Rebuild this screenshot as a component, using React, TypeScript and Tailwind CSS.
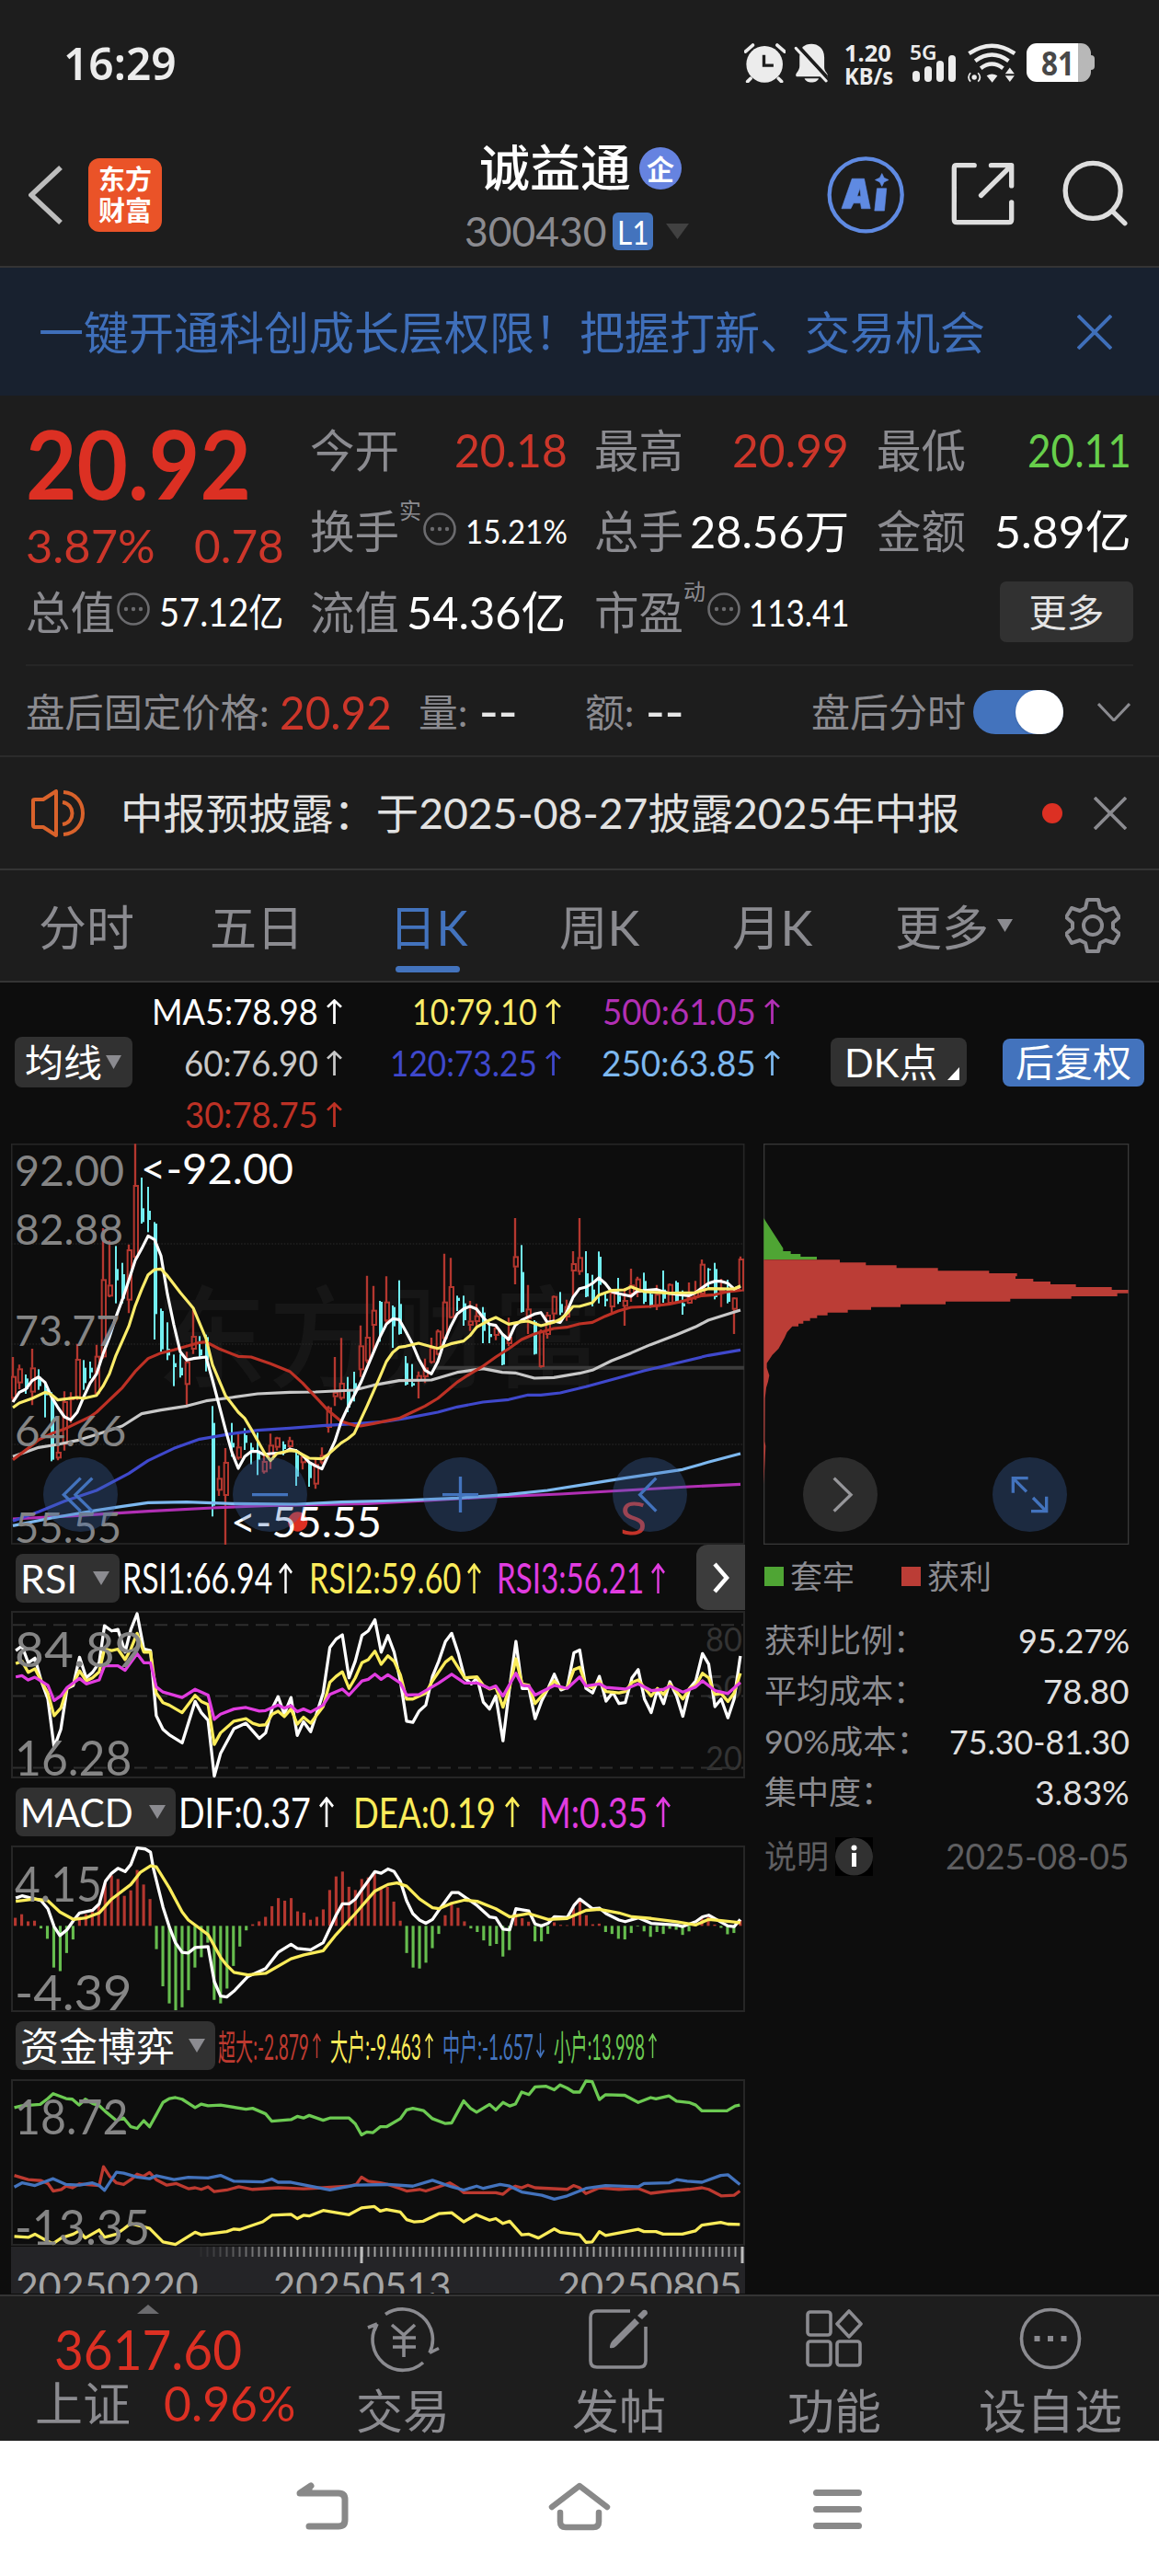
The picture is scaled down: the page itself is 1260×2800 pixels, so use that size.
import { useLayoutEffect, useRef, useState, type ReactNode } from "react";

/* Single-line text that is squeezed or stretched to the width of its box. */
function Fit({ className = "", children }: { className?: string; children: ReactNode }) {
  const box = useRef<HTMLSpanElement>(null);
  const text = useRef<HTMLSpanElement>(null);
  const [scale, setScale] = useState(1);
  useLayoutEffect(() => {
    if (box.current && text.current) setScale(box.current.clientWidth / text.current.offsetWidth);
  }, [children]);
  return (
    <span ref={box} className={`flex shrink-0 items-center ${className}`}>
      <span ref={text} className="shrink-0 origin-left whitespace-nowrap" style={{ transform: `scaleX(${scale})` }}>
        {children}
      </span>
    </span>
  );
}

const Up = ({ className = "", down = false }: { className?: string; down?: boolean }) => (
  <svg viewBox="0 0 16 28" preserveAspectRatio="none" className={`shrink-0 ${down ? "rotate-180" : ""} ${className}`}>
    <path d="M8 28V1.5M1 9l7-7.5L15 9" fill="none" stroke="currentColor" strokeWidth="2.6" />
  </svg>
);

const Tri = ({ className = "" }: { className?: string }) => (
  <svg viewBox="0 0 16 14" preserveAspectRatio="none" className={`shrink-0 ${className}`}>
    <path d="M0 0h16L8 14z" fill="currentColor" />
  </svg>
);

const Dots = ({ className = "" }: { className?: string }) => (
  <svg viewBox="0 0 36 36" className={`h-9 w-9 shrink-0 text-[#6b6b6e] ${className}`}>
    <circle cx="18" cy="18" r="16.5" fill="none" stroke="currentColor" strokeWidth="2.6" />
    <circle cx="10" cy="18" r="2.2" fill="currentColor" />
    <circle cx="18" cy="18" r="2.2" fill="currentColor" />
    <circle cx="26" cy="18" r="2.2" fill="currentColor" />
  </svg>
);

const Cross = ({ className = "" }: { className?: string }) => (
  <svg viewBox="0 0 36 36" className={`shrink-0 ${className}`}>
    <path d="M1 1l34 34M35 1L1 35" fill="none" stroke="currentColor" strokeWidth="3.7" />
  </svg>
);

function StatusBar() {
  return (
    <div className="flex h-[140px] items-start pt-[47px] font-['Noto_Sans'] text-[#ececec]">
      <Fit className="ml-[69px] h-[43px] w-[123px] text-[49px] font-semibold leading-none">16:29</Fit>
      <svg viewBox="57 50 134 128" className="ml-[617px] h-[43px] w-[45px]" fill="#ececec">
        <circle cx="123" cy="118" r="59" />
        <path d="M61 77l24-21M164 56l24 21M78 164l-10 10M168 164l10 10" stroke="#ececec" strokeWidth="11" strokeLinecap="round" />
        <path d="M121 88v34h31" fill="none" stroke="#1d1d1d" strokeWidth="10" />
      </svg>
      <svg viewBox="220 50 112 128" className="ml-[9px] h-[43px] w-[38px]" fill="#ececec">
        <path d="M248 62c20-18 70-14 70 34v32c0 14 12 18 12 30H228c-8-8 10-16 10-34V90zM254 164h46c-5 17-41 17-46 0z" />
        <path d="M234 60l92 100" stroke="#1d1d1d" strokeWidth="12" />
        <path d="M226 66l98 106" stroke="#ececec" strokeWidth="9" strokeLinecap="round" />
      </svg>
      <div className="ml-[17px] flex flex-col font-bold">
        <Fit className="h-[21px] w-[51px] text-[25px] leading-none">1.20</Fit>
        <Fit className="mt-[4px] h-[21px] w-[53px] text-[25px] leading-none">KB/s</Fit>
      </div>
      <div className="ml-[18px] flex w-[52px] flex-col font-semibold">
        <Fit className="h-[18px] w-[30px] text-[22px] leading-none">5G</Fit>
        <div className="mt-[-5px] flex h-[29px] items-end gap-[5px] pl-[3px]">
          <i className="h-[12px] w-2 rounded bg-[#ececec]" />
          <i className="h-[17px] w-2 rounded bg-[#ececec]" />
          <i className="h-[23px] w-2 rounded bg-[#ececec]" />
          <i className="h-[29px] w-2 rounded bg-[#ececec]" />
        </div>
      </div>
      <svg viewBox="784 50 160 128" className="ml-[10px] h-[43px] w-[54px]" fill="none" stroke="#ececec">
        <path d="M791 83q74-50 148 0M811 107q54-39 108 0M829 131q36-28 72 0" strokeWidth="13" />
        <path d="M848 155q17-10 35 0l-17 22zM908 149l15-20 15 20zM908 155h30l-15 20z" fill="#ececec" stroke="none" />
        <circle cx="808" cy="160" r="8" fill="#ececec" stroke="none" />
        <path d="M796 146q-13 14 0 28M820 146q13 14 0 28" strokeWidth="5" />
      </svg>
      <div className="ml-[11px] flex items-center">
        <div className="flex h-[42px] w-[70px] items-center rounded-[11px] bg-linear-to-r from-white from-80% to-[#b8b8b8] to-80% pl-[16px]">
          <Fit className="w-[36px] text-[35px] font-bold leading-none text-[#484848]">81</Fit>
        </div>
        <i className="h-4 w-1 rounded-r bg-[#b8b8b8]" />
      </div>
    </div>
  );
}

function Header() {
  return (
    <div className="flex h-[151px] border-b-2 border-[#343434]">
      <svg viewBox="0 0 38 64" className="ml-[31px] mt-[40px] h-16 w-[38px]">
        <path d="M35 2L3 32l32 30" fill="none" stroke="#bdbdbd" strokeWidth="5.5" />
      </svg>
      <div className="ml-[27px] mt-[32px] flex h-20 w-20 flex-col items-center justify-center rounded-xl bg-[#ea5328] text-[29px] font-bold leading-[34px] text-white">
        <span>东方</span>
        <span>财富</span>
      </div>
      <div className="ml-[329px] mt-[10px] w-[250px]">
        <div className="flex h-[65px] items-center">
          <Fit className="ml-[16px] w-[165px] text-[54px] font-medium leading-none text-white">诚益通</Fit>
          <span className="ml-[9px] flex h-[46px] w-[46px] items-center justify-center rounded-full bg-[#6683e0] text-[30px] font-bold leading-none text-white">企</span>
        </div>
        <div className="flex h-[54px] items-center pt-[18px]">
          <Fit className="w-[155px] text-[45px] leading-none text-[#8b8b90]">300430</Fit>
          <span className="ml-[6px] flex h-[41px] w-[44px] items-center justify-center rounded-[6px] bg-[#4373bd]">
            <Fit className="w-[34px] text-[37px] leading-none text-white">L1</Fit>
          </span>
          <Tri className="ml-[14px] h-[17px] w-[25px] text-[#414141]" />
        </div>
      </div>
      <svg viewBox="328 416 256 256" className="ml-[144px] mt-[29px] h-[85px] w-[85px]">
        <circle cx="455" cy="545" r="119" fill="none" stroke="#5f8ae2" strokeWidth="13" />
        <path d="M410 492h40l20 98h-29l-3-18h-23l-9 18h-30zM427 549h12l-3-26zM492 524h31l-7 73h-32zM508 475l7 14 15 7-15 7-7 14-7-14-15-7 15-7z" fill="#5f8ae2" fillRule="evenodd" stroke="#5f8ae2" strokeWidth="2" />
      </svg>
      <svg viewBox="730 440 212 208" className="ml-[49px] mt-[36px] h-[69px] w-[71px]" fill="none" stroke="#dedede" strokeWidth="16" strokeLinecap="round" strokeLinejoin="round">
        <path d="M808 451h-58q-8 0-8 8v170q0 9 9 9h170q9 0 9-9v-57M863 451h67v67M830 550l98-97" />
      </svg>
      <svg viewBox="1096 434 212 216" className="ml-[51px] mt-[34px] h-[72px] w-[71px]" fill="none" stroke="#dedede" strokeWidth="16" strokeLinecap="round">
        <circle cx="1195" cy="534" r="90" />
        <path d="M1258 600l41 40" />
      </svg>
    </div>
  );
}

function Quote() {
  const label = "w-[97px] text-[49px] leading-none text-[#8b8b90]";
  return (
    <div className="bg-[#1d1d1d]">
      <div className="mx-[28px] h-[294px] border-b-2 border-[#262626] pt-[15px]">
        <div className="grid grid-cols-[280px_280px_278px_279px] grid-rows-[88px_88px_88px] gap-x-[29px]">
          <div className="row-span-2 text-[#cd362a]">
            <div className="flex h-[88px] items-center pt-[28px]">
              <Fit className="w-[245px] text-[104px] font-bold leading-none text-[#dc3023]">20.92</Fit>
            </div>
            <div className="flex h-[117px] items-center pt-[2px]">
              <Fit className="w-[141px] text-[51px] leading-none">3.87%</Fit>
              <Fit className="ml-[42px] w-[98px] text-[51px] leading-none">0.78</Fit>
            </div>
          </div>
          <div className="flex items-center">
            <Fit className={label}>今开</Fit>
            <Fit className="ml-[60px] w-[123px] text-[50px] leading-none text-[#cd362a]">20.18</Fit>
          </div>
          <div className="flex items-center">
            <Fit className={label}>最高</Fit>
            <Fit className="ml-[53px] w-[127px] text-[50px] leading-none text-[#cd362a]">20.99</Fit>
          </div>
          <div className="flex items-center">
            <Fit className={label}>最低</Fit>
            <Fit className="ml-[67px] w-[113px] text-[50px] leading-none text-[#67cf4b]">20.11</Fit>
          </div>
          <div className="flex items-center">
            <Fit className={label}>换手</Fit>
            <span className="mb-[44px] w-[24px] text-[24px] leading-none text-[#8b8b90]">实</span>
            <Dots className="mb-[4px] ml-[2px]" />
            <Fit className="ml-[10px] w-[111px] text-[36px] leading-none text-white">15.21%</Fit>
          </div>
          <div className="flex items-center">
            <Fit className={label}>总手</Fit>
            <Fit className="ml-[7px] w-[173px] text-[49px] leading-none text-white">28.56万</Fit>
          </div>
          <div className="flex items-center">
            <Fit className={label}>金额</Fit>
            <Fit className="ml-[31px] w-[149px] text-[49px] leading-none text-white">5.89亿</Fit>
          </div>
          <div className="flex items-center">
            <Fit className={label}>总值</Fit>
            <Dots className="mb-[6px] ml-[2px]" />
            <Fit className="ml-[10px] w-[135px] text-[42px] leading-none text-white">57.12亿</Fit>
          </div>
          <div className="flex items-center">
            <Fit className={label}>流值</Fit>
            <Fit className="ml-[8px] w-[173px] text-[49px] leading-none text-white">54.36亿</Fit>
          </div>
          <div className="flex items-center">
            <Fit className={label}>市盈</Fit>
            <span className="mb-[44px] w-[24px] text-[24px] leading-none text-[#8b8b90]">动</span>
            <Dots className="mb-[6px] ml-[2px]" />
            <Fit className="ml-[9px] w-[110px] text-[41px] leading-none text-white">113.41</Fit>
          </div>
          <div className="flex items-center justify-end">
            <span className="flex h-[66px] w-[145px] items-center justify-center rounded-[7px] bg-[#313131]">
              <Fit className="w-[82px] text-[41px] leading-none text-[#e4e4e4]">更多</Fit>
            </span>
          </div>
        </div>
      </div>
      <div className="flex h-[99px] items-center border-b-2 border-[#2b2b2b] pt-[2px] text-[42px] leading-none text-[#8b8b90]">
        <Fit className="ml-[28px] w-[265px]">盘后固定价格:</Fit>
        <Fit className="ml-[11px] w-[122px] text-[50px] text-[#cd362a]">20.92</Fit>
        <Fit className="ml-[29px] w-[54px]">量:</Fit>
        <Fit className="ml-[12px] w-[41px] font-bold text-[#e6e6e6]">--</Fit>
        <Fit className="ml-[74px] w-[54px]">额:</Fit>
        <Fit className="ml-[12px] w-[41px] font-bold text-[#e6e6e6]">--</Fit>
        <Fit className="ml-[139px] w-[168px]">盘后分时</Fit>
        <span className="ml-[8px] flex h-[48px] w-[98px] justify-end rounded-full bg-[#4373bd]">
          <i className="h-[48px] w-[52px] rounded-full bg-white shadow" />
        </span>
        <svg viewBox="0 0 36 20" className="ml-[37px] h-5 w-9">
          <path d="M1 1l17 18L35 1" fill="none" stroke="#8b8b90" strokeWidth="3" />
        </svg>
      </div>
    </div>
  );
}

function Notice() {
  return (
    <div className="flex h-[123px] items-center border-b-2 border-[#343434]">
      <svg viewBox="0 0 60 52" className="ml-[34px] h-[52px] w-[60px]" fill="none" stroke="#d9622b" strokeWidth="4" strokeLinejoin="round">
        <path d="M2 12q0-1 2-1h9L27 2v48L13 41H4q-2 0-2-2zM35 3c28 2 28 44 0 46M34 14c14 2 14 22 0 24" />
      </svg>
      <Fit className="ml-[37px] w-[912px] text-[46px] leading-none text-[#e2e2e2]">中报预披露：于2025-08-27披露2025年中报</Fit>
      <i className="ml-[90px] h-[22px] w-[22px] rounded-full bg-[#dc3023]" />
      <Cross className="ml-[34px] h-[36px] w-[36px] text-[#8b8b90]" />
    </div>
  );
}

function Tabs() {
  return (
    <div className="flex h-[122px] border-b-2 border-[#343434] pt-[4px] text-[52px] leading-none text-[#8b8b90]">
      <Fit className="ml-[42px] w-[104px]">分时</Fit>
      <Fit className="ml-[82px] w-[102px]">五日</Fit>
      <div className="relative ml-[93px] flex w-[85px]">
        <Fit className="w-[85px] text-[#4373bd]">日K</Fit>
        <i className="absolute bottom-[9px] left-[7px] h-[7px] w-[70px] rounded bg-[#4373bd]" />
      </div>
      <Fit className="ml-[100px] w-[87px]">周K</Fit>
      <Fit className="ml-[101px] w-[87px]">月K</Fit>
      <Fit className="ml-[90px] w-[102px]">更多</Fit>
      <Tri className="mb-[5px] ml-[9px] h-[14px] w-[17px] self-center" />
      <svg viewBox="0 0 60 60" className="mb-[5px] ml-[57px] h-[60px] w-[60px] self-center" fill="none" stroke="currentColor" strokeWidth="4" strokeLinejoin="round">
        <path d="M24 2h12l2 9 6 3 9-3 6 10-7 6v6l7 6-6 10-9-3-6 3-2 9H24l-2-9-6-3-9 3L1 39l7-6v-6l-7-6L7 11l9 3 6-3z" />
        <circle cx="30" cy="30" r="10" />
      </svg>
    </div>
  );
}

function Ma({ box, text, color, children }: { box: string; text: string; color: string; children: ReactNode }) {
  return (
    <div className={`flex h-[56px] items-center justify-end text-[38px] leading-none ${box} ${color}`}>
      <Fit className={text}>{children}</Fit>
      <Up className="ml-[9px] h-[27px] w-[17px]" />
    </div>
  );
}

function MaRow() {
  return (
    <div className="flex h-[175px] items-center bg-[#0d0d0d]">
      <span className="mb-[3px] ml-[16px] flex h-[55px] w-[128px] items-center rounded-lg bg-[#313131]">
        <Fit className="ml-[11px] w-[84px] text-[41px] leading-none text-white">均线</Fit>
        <Tri className="ml-[4px] h-[15px] w-[17px] text-[#8b8b90]" />
      </span>
      <div className="flex h-full pt-[3px]">
        <div className="w-[228px]">
          <Ma box="w-[228px]" text="w-[181px]" color="text-white">MA5:78.98</Ma>
          <Ma box="w-[228px]" text="w-[146px]" color="text-[#c8c8c8]">60:76.90</Ma>
          <Ma box="w-[228px]" text="w-[145px]" color="text-[#bd3125]">30:78.75</Ma>
        </div>
        <div className="w-[238px]">
          <Ma box="w-[238px]" text="w-[136px]" color="text-[#fbec6a]">10:79.10</Ma>
          <Ma box="w-[238px]" text="w-[160px]" color="text-[#3f48cc]">120:73.25</Ma>
        </div>
        <div className="w-[238px]">
          <Ma box="w-[238px]" text="w-[167px]" color="text-[#b12fb4]">500:61.05</Ma>
          <Ma box="w-[238px]" text="w-[168px]" color="text-[#7db8ef]">250:63.85</Ma>
        </div>
      </div>
      <span className="relative mb-[2px] ml-[55px] flex h-[53px] w-[148px] items-center rounded-lg bg-[#313131]">
        <Fit className="ml-[15px] w-[101px] text-[43px] leading-none text-white">DK点</Fit>
        <svg viewBox="0 0 13 14" className="absolute bottom-[7px] right-[8px] h-[14px] w-[13px]">
          <path d="M13 0v14H0z" fill="#fff" />
        </svg>
      </span>
      <span className="mb-[2px] ml-[39px] flex h-[52px] w-[154px] items-center justify-center rounded-lg bg-[#4373bd]">
        <Fit className="w-[126px] text-[41px] leading-none text-white">后复权</Fit>
      </span>
    </div>
  );
}

/* direction, high, body top, body bottom, low */
const CANDLES = `r765,828,900,912 r790,803,850,870 c822,835,870,885 r738,800,880,922 c805,830,860,872 c850,870,890,962 c880,910,1100,1105 r1000,1075,1095,1102 r877,910,1050,1070 r880,895,905,980 r722,772,900,905 c775,800,850,872 c780,800,815,835 r725,762,885,890 r345,512,765,770 r385,530,567,570 c403,478,515,590 c458,495,575,590 r398,415,580,622 r70,205,440,445 c180,280,325,330 c210,288,318,358 c325,330,625,708 c607,615,740,748 c652,738,760,775 c757,785,798,860 c755,800,825,832 r748,780,855,930 r612,697,740,755 c697,740,760,765 c692,700,775,812 c925,980,1250,1285 r1120,1160,1200,1218 r1062,1108,1217,1377 c980,1045,1060,1090 r1015,1058,1095,1100 c997,1020,1045,1068 c1045,1060,1075,1115 c1012,1070,1100,1150 r1080,1105,1140,1145 r1015,1052,1100,1130 r1025,1028,1060,1070 c1040,1050,1065,1085 r1025,1037,1058,1062 c1065,1085,1155,1185 r1085,1090,1110,1132 c1105,1110,1160,1188 r1095,1115,1180,1195 r1060,1085,1110,1115 r925,930,995,1012 r765,880,895,925 r703,850,900,905 c830,870,930,945 c813,850,880,910 r662,728,807,830 r500,700,778,785 r533,612,662,745 c582,585,690,715 r502,585,648,660 c597,602,665,735 c515,592,690,692 c762,785,855,858 c788,850,858,862 r812,825,842,900 r770,800,830,850 r702,735,783,787 r675,680,757,760 r428,585,705,710 r442,535,637,640 c565,572,582,615 c565,590,645,663 r582,647,662,680 r592,630,650,665 c602,620,680,720 c660,690,700,720 r660,670,695,710 c690,700,790,792 r637,700,722,730 r312,437,472,528 c400,488,618,620 r530,608,640,690 c645,650,755,757 r675,680,797,800 r618,628,692,705 r565,567,625,650 c553,592,620,628 r578,600,635,647 r420,460,485,570 r312,440,487,497 c420,492,568,570 c497,545,580,600 c421,438,530,590 c555,575,583,600 r545,555,602,620 c507,565,585,592 r540,580,600,663 r477,530,560,585 r503,510,555,570 c490,517,585,592 c555,560,602,604 r530,560,600,612 c483,545,575,588 r525,528,590,595 c517,522,582,585 c548,590,600,627 r522,570,590,592 r517,555,570,578 r447,462,560,565 c475,478,482,545 c458,478,570,577 r510,545,550,602 c513,540,585,590 r570,572,610,690 r437,445,550,552`
  .split(" ")
  .map((s) => ({ up: s[0] === "r", v: s.slice(1).split(",").map(Number) }));

const MA_LINES: [string, string][] = [
  ["#b12fb4", "42,1293 252,1282 483,1268 693,1257 882,1249 1197,1243 1407,1232 1575,1222 1827,1212 2037,1200 2247,1188 2415,1180"],
  ["#7db8ef", "42,1315 168,1290 315,1265 399,1252 483,1240 609,1238 756,1243 966,1245 1113,1238 1302,1233 1491,1225 1659,1213 1785,1200 1911,1180 2037,1160 2226,1132 2310,1108 2415,1080"],
  ["#3f48cc", "42,1300 126,1270 210,1235 315,1200 420,1145 483,1103 567,1063 651,1033 756,1015 840,1004 945,997 1050,989 1155,983 1260,975 1323,965 1428,945 1491,928 1575,912 1659,904 1722,889 1764,889 1827,882 1911,862 2016,833 2100,810 2205,785 2310,760 2415,742"],
  ["#c8c8c8", "42,1090 126,1060 189,1050 252,1037 315,1018 399,990 462,950 525,938 609,925 672,908 756,897 840,885 945,880 1029,879 1155,873 1218,857 1302,842 1407,840 1491,815 1575,803 1638,815 1680,817 1743,834 1806,832 1890,818 1932,808 1995,777 2058,752 2121,725 2205,693 2268,667 2310,645 2415,612"],
  ["#bd3125", "42,1100 105,1052 126,1035 168,1015 210,1000 252,980 294,960 315,945 378,885 399,865 441,812 483,770 525,752 567,742 609,730 651,718 672,716 714,738 777,763 819,765 882,787 945,812 987,850 1029,895 1071,940 1113,975 1155,988 1176,990 1218,982 1302,965 1344,945 1386,925 1428,900 1470,865 1491,847 1533,820 1575,795 1617,765 1659,738 1701,708 1743,690 1806,672 1848,668 1890,657 1932,652 1974,632 2016,615 2058,603 2121,600 2184,592 2226,583 2289,565 2331,562 2373,552 2415,547"],
  ["#fff", "42,912 63,880 84,870 105,842 126,830 147,848 168,895 189,930 210,960 231,970 252,945 273,895 294,850 315,820 336,755 357,700 378,635 399,578 420,515 441,450 462,412 483,370 504,382 525,435 546,560 567,660 588,748 609,775 630,770 672,765 693,840 714,920 735,1000 756,1075 777,1128 798,1090 819,1073 840,1073 861,1083 882,1080 924,1077 945,1065 966,1070 987,1085 1008,1108 1029,1120 1050,1130 1071,1085 1092,1040 1113,975 1134,930 1155,890 1176,850 1197,800 1239,700 1260,658 1281,640 1302,643 1323,680 1344,720 1365,770 1386,808 1407,820 1428,780 1449,715 1470,665 1491,625 1512,608 1533,600 1554,608 1575,635 1596,658 1617,662 1638,690 1659,708 1680,662 1701,645 1722,635 1743,625 1764,620 1785,652 1806,648 1827,652 1848,620 1869,570 1890,542 1911,537 1932,525 1953,507 1974,525 1995,552 2016,558 2058,567 2079,550 2142,545 2184,558 2247,565 2268,555 2310,525 2331,518 2352,518 2373,524 2394,543 2415,535"],
  ["#fbec6a", "42,930 63,915 105,900 147,880 168,888 189,905 252,897 273,900 315,890 336,860 357,820 378,760 420,665 441,598 462,545 483,497 504,480 525,478 546,500 588,555 630,605 651,655 672,705 693,790 735,890 777,945 798,965 819,1000 861,1075 882,1103 903,1080 945,1070 966,1072 1008,1095 1050,1097 1071,1082 1113,1045 1134,1032 1155,1015 1176,970 1197,925 1239,830 1260,780 1281,750 1302,733 1323,730 1365,720 1428,737 1470,722 1512,713 1533,695 1554,668 1596,645 1617,636 1659,658 1701,650 1722,648 1764,663 1806,652 1827,642 1848,625 1869,600 1890,600 1932,588 1953,563 1995,548 2037,546 2058,536 2100,552 2184,557 2268,555 2310,542 2394,543 2415,533"],
];

function RoundButton({ className = "", d, gray = false }: { className?: string; d: string; gray?: boolean }) {
  return (
    <span className={`absolute top-[341px] h-[81px] w-[81px] rounded-full ${gray ? "bg-[#2c2c2c]" : "bg-[#3f6eb7]/30"} ${className}`}>
      <svg viewBox="0 0 243 243" className="h-full w-full">
        <path d={d} fill="none" stroke={gray ? "#97979b" : "#4373bd"} strokeWidth="10" />
      </svg>
    </span>
  );
}

function KChart() {
  const axis = "absolute left-[4px] text-[47px] leading-none text-[#858585]";
  return (
    <div className="relative ml-[12px] h-[436px] w-[798px]">
      <span className="absolute left-[158px] top-[150px] whitespace-nowrap text-[120px] font-medium leading-none tracking-[2px] text-[#161616]">东方财富</span>
      <svg viewBox="36 69 2394 1308" className="absolute inset-0 h-full w-full">
        <rect x="38" y="71" width="2388" height="1303" fill="none" stroke="#262626" strokeWidth="5" />
        <path d="M36 396H2427M36 723H2427M36 1050H2427" stroke="#2a2a2a" strokeWidth="3" strokeDasharray="5 5" />
        <path d="M1420 800H2427" stroke="#3a3a3a" strokeWidth="12" />
        {CANDLES.map(({ up, v: [h, t, b, l] }, i) => {
          const x = 42 + i * 21;
          return up ? (
            <g key={i} stroke="#b4372f" fill="none">
              <path d={`M${x} ${h}V${t}M${x} ${b}V${l}`} strokeWidth="7" />
              <rect x={x - 4} y={t + 2} width="13" height={Math.max(b - t - 4, 2)} strokeWidth="6" />
            </g>
          ) : (
            <g key={i} fill="#72eef0">
              <rect x={x - 3} y={h} width="6" height={l - h} />
              <rect x={x - 3} y={t} width="12" height={b - t} />
            </g>
          );
        })}
        {MA_LINES.map(([c, p]) => (
          <polyline key={c} points={p} fill="none" stroke={c} strokeWidth="9.5" strokeLinejoin="round" />
        ))}
        <circle cx="971" cy="1302" r="32" fill="#dc3023" />
      </svg>
      <div className={`${axis} top-[5px]`}><Fit className="w-[119px]">92.00</Fit></div>
      <div className={`${axis} top-[69px]`}><Fit className="w-[118px]">82.88</Fit></div>
      <div className={`${axis} top-[179px]`}><Fit className="w-[114px]">73.77</Fit></div>
      <div className={`${axis} top-[288px]`}><Fit className="w-[121px]">64.66</Fit></div>
      <div className={`${axis} top-[393px]`}><Fit className="w-[116px]">55.55</Fit></div>
      <div className="absolute left-[141px] top-[3px] text-[47px] leading-none text-white"><Fit className="w-[166px]">&lt;-92.00</Fit></div>
      <div className="absolute left-[239px] top-[387px] text-[47px] leading-none text-white"><Fit className="w-[164px]">&lt;-55.55</Fit></div>
      <div className="absolute left-[662px] top-[381px] text-[50px] leading-none text-[#c43329]"><Fit className="w-[29px] font-['Noto_Sans']">S</Fit></div>
      <RoundButton className="left-[35px]" d="M122 68L67 122l55 54M160 68l-55 54 55 54" />
      <RoundButton className="left-[241px]" d="M63 122h117" />
      <RoundButton className="left-[448px]" d="M63 122h117M121.500 63v117" />
      <RoundButton className="left-[654px]" d="M142 68L89 122l53 54" />
    </div>
  );
}

function ChipChart() {
  return (
    <div className="relative ml-[20px] h-[436px] w-[398px]">
      <svg viewBox="61 69 1194 1308" className="h-full w-full">
        <rect x="63" y="71" width="1188" height="1304" fill="none" stroke="#383838" strokeWidth="4" />
        <path d="M62 312L68 322 125 410V420H150V429H182V438H235V448H62z" fill="#4fa534" />
        <path d="M62 448H310V457H395V466H495V475H630V484H797V492H888V502H883V510H941V519H997V528H1080V537H1197V546H1251V557H1215V567H1065V575H866V584H655V593H508V602H412V611H336V620H270V629H236V638H213V647H191V656H175V665H155L138 684 130 702 110 738 90 758 72 785V800L80 825 76 845 70 865 66 900 65 1040 68 1055 62 1180z" fill="#bb3d36" />
      </svg>
      <RoundButton gray className="left-[43px]" d="M101 68l55 54-55 54" />
      <RoundButton className="left-[249px]" d="M111 112L69 70M67 116V68h49M132 132l43 44M176 128v48h-50" />
    </div>
  );
}

function Pill({ box, text, tri, children }: { box: string; text: string; tri: string; children: ReactNode }) {
  return (
    <span className={`ml-[5px] flex h-[53px] shrink-0 items-center rounded-lg bg-[#313131] text-white ${box}`}>
      <Fit className={`ml-[5px] leading-none ${text}`}>{children}</Fit>
      <Tri className={`h-[15px] w-[18px] text-[#8b8b90] ${tri}`} />
    </span>
  );
}

function Plot({ viewBox, className, lines, children }: { viewBox: string; className: string; lines: [string, string][]; children?: ReactNode }) {
  return (
    <svg viewBox={viewBox} preserveAspectRatio="none" className={`block w-[798px] overflow-visible border-2 border-[#262626] ${className}`}>
      {children}
      {lines.map(([c, p]) => (
        <polyline key={c} points={p} fill="none" stroke={c} strokeWidth="3.3" strokeLinejoin="round" vectorEffect="non-scaling-stroke" />
      ))}
    </svg>
  );
}

const RSI: [string, string][] = [
  ["#fff", "30,340 43,325 56,380 70,365 83,440 97,500 110,660 124,600 137,465 150,455 163,362 177,430 190,412 204,380 215,258 230,275 243,270 258,345 270,270 283,218 297,335 311,340 323,555 337,600 350,618 377,645 404,508 417,545 431,570 444,755 457,680 485,598 510,580 538,630 551,612 565,530 577,492 590,550 604,495 617,620 630,575 645,608 658,545 671,480 685,330 698,302 711,288 725,430 738,375 752,290 765,275 779,238 792,345 806,290 819,345 832,440 845,573 858,577 871,540 885,520 899,425 912,375 926,310 939,283 953,350 966,430 980,450 992,430 1005,510 1018,533 1031,490 1046,638 1060,460 1073,310 1086,465 1100,465 1113,565 1127,505 1141,462 1153,418 1167,470 1180,462 1194,347 1206,338 1219,465 1233,480 1247,425 1261,507 1275,478 1288,515 1301,512 1315,430 1328,403 1341,500 1355,545 1368,470 1381,515 1394,443 1408,490 1421,557 1435,465 1448,440 1462,350 1475,385 1488,525 1501,500 1515,562 1528,500 1541,358"],
  ["#fbec5a", "30,383 43,375 56,412 70,400 83,440 97,480 110,555 124,530 137,465 150,450 163,407 177,440 190,430 204,410 215,335 230,340 243,335 258,370 270,335 283,283 297,345 311,345 323,480 337,512 350,520 377,545 404,488 417,508 431,518 444,650 457,612 485,573 510,565 524,580 538,587 551,585 565,550 577,540 590,558 604,533 617,583 630,560 645,580 671,525 685,445 698,425 711,410 725,465 738,430 752,380 765,370 779,342 792,385 806,357 819,375 832,420 845,500 858,500 885,480 899,440 926,378 939,362 966,430 992,427 1005,455 1018,467 1031,460 1046,527 1060,460 1073,367 1086,450 1100,455 1113,515 1141,465 1153,440 1167,465 1180,462 1194,403 1206,395 1219,455 1233,463 1247,440 1261,475 1288,480 1301,475 1315,445 1328,437 1355,490 1368,465 1381,485 1394,450 1421,500 1435,465 1448,455 1462,415 1475,430 1488,485 1501,482 1515,508 1528,480 1541,415"],
  ["#e13ce0", "30,427 43,423 56,437 70,428 97,455 110,505 124,490 137,462 163,432 177,450 204,437 215,390 243,390 258,405 283,350 297,380 311,380 323,460 337,477 377,495 404,468 431,487 444,567 457,550 485,533 510,528 538,540 551,538 577,520 590,530 604,522 617,542 630,533 645,543 671,520 685,485 711,467 725,487 752,440 765,435 779,418 792,435 806,420 832,447 845,487 871,485 912,447 939,418 966,447 992,447 1018,465 1031,457 1046,490 1073,415 1086,455 1100,457 1113,487 1153,455 1180,465 1206,427 1219,457 1247,450 1261,462 1301,467 1328,450 1355,472 1381,468 1394,457 1421,477 1448,460 1462,440 1488,472 1515,482 1541,445"],
];

const MACD_BARS = [403, 392, 414, 412, 436, 468, 557, 568, 512, 470, 400, 392, 385, 365, 295, 272, 283, 335, 318, 255, 300, 345, 500, 615, 668, 689, 680, 627, 557, 525, 480, 657, 668, 622, 552, 492, 442, 423, 414, 400, 367, 342, 350, 342, 383, 387, 409, 400, 377, 317, 275, 260, 307, 317, 283, 278, 262, 307, 307, 353, 412, 512, 557, 560, 542, 497, 453, 395, 355, 372, 414, 436, 447, 473, 490, 484, 523, 503, 390, 404, 415, 476, 476, 453, 417, 425, 426, 372, 350, 395, 423, 421, 447, 453, 468, 470, 450, 430, 445, 462, 447, 453, 437, 440, 456, 445, 429, 400, 400, 424, 434, 454, 450, 410];

const MACD: [string, string][] = [
  ["#fff", "30,342 43,335 70,345 83,350 97,375 110,430 122,458 137,440 150,412 163,388 190,380 204,360 217,290 230,265 243,250 258,260 270,238 283,187 300,190 311,200 317,250 337,370 350,430 363,480 377,510 390,512 404,495 431,492 444,600 457,645 470,648 485,630 514,585 551,560 577,510 604,485 617,498 645,502 671,480 698,395 711,360 725,360 738,345 752,315 779,260 792,265 806,252 819,260 832,290 845,350 858,390 872,410 885,420 899,408 912,380 939,325 953,325 992,365 1018,400 1031,403 1046,438 1060,440 1073,375 1086,378 1100,382 1113,422 1126,428 1140,420 1153,400 1180,402 1194,365 1206,345 1233,375 1247,373 1261,390 1288,410 1301,415 1328,403 1355,420 1408,425 1421,430 1448,415 1462,400 1475,395 1515,428 1528,430 1541,408"],
  ["#fbec5a", "30,352 70,345 97,350 122,385 150,408 177,403 204,388 230,345 270,300 290,262 311,242 323,245 350,310 377,385 390,410 431,455 457,525 470,550 485,572 514,580 551,575 604,530 631,518 671,505 698,455 738,390 779,320 806,300 825,295 845,305 872,345 899,372 912,375 939,358 966,348 992,352 1031,375 1060,400 1100,390 1140,408 1180,405 1219,380 1247,377 1288,388 1315,400 1355,405 1408,415 1448,425 1475,408 1501,412 1541,418"],
];

const FUNDS: [string, string][] = [
  ["#6cca52", "27,978 43,972 81,968 97,950 108,935 135,950 148,952 162,970 175,952 190,965 204,972 217,990 240,1018 255,1010 270,1037 283,1042 297,1018 309,1037 323,1000 337,962 350,950 363,947 377,952 404,978 417,967 431,972 457,970 510,983 524,980 551,997 564,1020 604,1015 617,1005 630,1010 642,1002 671,1017 685,1010 725,1010 738,1028 751,1062 762,1053 775,1055 790,1037 803,1037 832,1012 845,985 858,980 880,987 899,1012 926,1027 939,1025 952,990 964,957 978,980 991,992 1018,968 1031,985 1046,962 1060,973 1072,967 1085,930 1100,938 1113,914 1136,912 1153,923 1165,908 1180,918 1193,930 1206,930 1219,896 1232,898 1247,953 1260,938 1300,940 1328,962 1354,947 1365,951 1392,942 1408,958 1434,962 1448,970 1461,988 1513,988 1530,973 1540,970"],
  ["#bd3a30", "27,1187 56,1200 83,1203 97,1212 108,1235 125,1230 135,1220 148,1225 163,1213 204,1218 213,1160 226,1190 240,1210 255,1215 270,1200 283,1183 296,1190 309,1178 323,1200 345,1217 365,1212 390,1228 404,1225 417,1230 431,1222 444,1237 470,1232 495,1222 524,1230 577,1225 630,1228 671,1225 725,1220 740,1215 751,1192 765,1205 790,1210 806,1215 832,1228 845,1235 872,1230 885,1235 912,1222 935,1210 952,1225 964,1240 1031,1240 1046,1245 1060,1228 1072,1220 1085,1225 1098,1217 1113,1225 1180,1230 1193,1218 1206,1225 1219,1243 1247,1225 1288,1230 1328,1227 1354,1242 1392,1235 1434,1230 1461,1225 1475,1230 1501,1250 1528,1248 1540,1235"],
  ["#4373bd", "27,1223 43,1210 70,1218 108,1197 135,1215 163,1217 190,1210 204,1218 215,1233 240,1177 255,1180 283,1192 309,1197 323,1188 360,1200 390,1193 431,1195 457,1187 485,1205 545,1207 564,1198 577,1208 604,1208 685,1232 738,1217 806,1215 858,1220 899,1202 939,1222 964,1232 991,1220 1005,1227 1040,1215 1060,1220 1085,1238 1127,1248 1153,1260 1180,1250 1219,1227 1260,1218 1328,1222 1340,1212 1392,1210 1408,1200 1430,1205 1461,1208 1500,1187 1515,1185 1540,1215"],
  ["#fbec5a", "27,1375 56,1378 70,1368 94,1388 108,1397 125,1380 150,1368 162,1358 175,1380 204,1355 215,1378 240,1368 255,1352 270,1335 309,1350 337,1392 363,1400 404,1362 417,1370 470,1360 485,1352 497,1354 545,1330 564,1310 604,1307 617,1320 630,1310 642,1312 671,1295 725,1308 751,1287 778,1283 790,1297 803,1292 832,1300 845,1323 860,1330 880,1328 912,1305 939,1302 964,1330 990,1308 1018,1325 1031,1320 1046,1335 1060,1328 1085,1370 1100,1368 1120,1380 1153,1352 1165,1362 1206,1370 1219,1393 1232,1392 1247,1360 1260,1372 1328,1353 1340,1360 1365,1360 1380,1368 1420,1368 1447,1358 1461,1340 1500,1332 1515,1337 1540,1338"],
];

function Indicators() {
  const axis = "absolute left-[4px] text-[53px] leading-none text-[#858585]";
  const faint = "absolute right-[3px] text-[36px] leading-none text-[#333]";
  return (
    <div className="ml-[12px] w-[798px]">
      <div className="flex h-[72px] items-center text-[46px] leading-none">
        <Pill box="w-[113px]" text="w-[62px] text-[43px]" tri="ml-[17px]">RSI</Pill>
        <div className="flex items-center text-white"><Fit className="ml-[3px] w-[163px]">RSI1:66.94</Fit><Up className="ml-[7px] h-[33px] w-[15px]" /></div>
        <div className="flex items-center text-[#fbec5a]"><Fit className="ml-[18px] w-[165px]">RSI2:59.60</Fit><Up className="ml-[7px] h-[33px] w-[15px]" /></div>
        <div className="flex items-center text-[#e13ce0]"><Fit className="ml-[17px] w-[160px]">RSI3:56.21</Fit><Up className="ml-[8px] h-[33px] w-[15px]" /></div>
        <span className="ml-auto flex h-[71px] w-[53px] items-center justify-center self-start rounded-l-[12px] bg-[#3c3c3c]">
          <svg viewBox="0 0 20 34" className="h-[34px] w-5"><path d="M3 2l13 15L3 32" fill="none" stroke="#fff" strokeWidth="4.5" /></svg>
        </span>
      </div>
      <div className="relative">
        <div className={`${faint} top-[12px]`}><Fit className="w-[40px]">80</Fit></div>
        <div className={`${faint} top-[64px]`}><Fit className="w-[40px]">50</Fit></div>
        <div className={`${faint} top-[141px]`}><Fit className="w-[40px]">20</Fit></div>
        <Plot viewBox="24 215 1523 541" className="relative h-[182px]" lines={RSI}>
          <path d="M24 255H1547M24 490H1547M24 727H1547" stroke="#2e2e2e" strokeWidth="2" strokeDasharray="14 8" vectorEffect="non-scaling-stroke" />
        </Plot>
        <div className={`${axis} top-[14px]`}><Fit className="w-[140px]">84.89</Fit></div>
        <div className={`${axis} top-[132px]`}><Fit className="w-[127px]">16.28</Fit></div>
      </div>

      <div className="flex h-[73px] items-center text-[46px] leading-none">
        <Pill box="w-[174px]" text="w-[123px] text-[43px]" tri="ml-[17px]">MACD</Pill>
        <div className="flex items-center text-white"><Fit className="ml-[3px] w-[144px]">DIF:0.37</Fit><Up className="ml-[9px] h-[33px] w-[16px]" /></div>
        <div className="flex items-center text-[#fbec5a]"><Fit className="ml-[21px] w-[155px]">DEA:0.19</Fit><Up className="ml-[10px] h-[33px] w-[16px]" /></div>
        <div className="flex items-center text-[#e13ce0]"><Fit className="ml-[21px] w-[118px]">M:0.35</Fit><Up className="ml-[9px] h-[33px] w-[16px]" /></div>
      </div>
      <div className="relative">
        <Plot viewBox="24 185 1523 504" className="h-[181px]" lines={MACD}>
          {MACD_BARS.map((v, i) => (
            <rect key={i} x={26 + i * 13.38} y={Math.min(v, 428)} width="6" height={Math.max(Math.abs(v - 428), 2)} fill={v < 428 ? "#b4372f" : "#66bd4e"} />
          ))}
        </Plot>
        <div className={`${axis} top-[14px]`}><Fit className="w-[95px]">4.15</Fit></div>
        <div className={`${axis} top-[132px]`}><Fit className="w-[127px]">-4.39</Fit></div>
      </div>

      <div className="flex h-[73px] items-center text-[38px] leading-none">
        <Pill box="w-[217px]" text="w-[168px] text-[42px]" tri="ml-[15px]">资金博弈</Pill>
        <div className="flex items-center text-[#bd3a30]"><Fit className="ml-[3px] w-[99px]">超大:-2.879</Fit><Up className="ml-[4px] h-[27px] w-[9px]" /></div>
        <div className="flex items-center text-[#fbec5a]"><Fit className="ml-[10px] w-[99px]">大户:-9.463</Fit><Up className="ml-[4px] h-[27px] w-[9px]" /></div>
        <div className="flex items-center text-[#4373bd]"><Fit className="ml-[10px] w-[99px]">中户:-1.657</Fit><Up down className="ml-[3px] h-[27px] w-[9px]" /></div>
        <div className="flex items-center text-[#6cca52]"><Fit className="ml-[10px] w-[99px]">小户:13.998</Fit><Up className="ml-[4px] h-[27px] w-[9px]" /></div>
      </div>
      <div className="relative">
        <Plot viewBox="24 896 1523 502" className="h-[181px]" lines={FUNDS} />
        <div className={`${axis} top-[13px]`}><Fit className="w-[123px]">18.72</Fit></div>
        <div className={`${axis} top-[133px]`}><Fit className="w-[147px]">-13.35</Fit></div>
      </div>

      <div className="mt-[1px] h-[51px] overflow-hidden bg-[#242427]">
        <svg viewBox="0 0 798 18" className="block h-[18px] w-[798px]">
          {Array.from({ length: 84 }, (_, i) => (
            <path key={i} d={`M${206.500 + i * 7} 0V11`} stroke="#a0a0a0" strokeWidth="2" opacity={Math.min(1, (i + 1) / 14)} />
          ))}
          <path d="M381 0v18M795 0v18" stroke="#bdbdbd" strokeWidth="3" />
        </svg>
        <div className="flex items-center pt-[3px] text-[43px] leading-[44px] text-[#a5a5a5]">
          <Fit className="ml-[5px] w-[199px]">20250220</Fit>
          <Fit className="ml-[81px] w-[194px]">20250513</Fit>
          <Fit className="ml-[115px] w-[201px]">20250805</Fit>
        </div>
      </div>
    </div>
  );
}

function Stat({ label, lw, value, vw }: { label: string; lw: string; value: string; vw: string }) {
  return (
    <div className="flex h-[55px] items-center justify-between leading-none">
      <Fit className={`text-[35px] text-[#8b8b90] ${lw}`}>{label}</Fit>
      <Fit className={`text-[37px] text-[#e0e0e0] ${vw}`}>{value}</Fit>
    </div>
  );
}

function ChipStats() {
  return (
    <div className="ml-[21px] w-[397px] pt-[7px]">
      <div className="flex h-[55px] items-center text-[35px] leading-none text-[#8b8b90]">
        <i className="h-[21px] w-[21px] bg-[#4fa534]" />
        <Fit className="ml-[7px] w-[70px]">套牢</Fit>
        <i className="ml-[51px] h-[21px] w-[21px] bg-[#bb3d36]" />
        <Fit className="ml-[7px] w-[70px]">获利</Fit>
      </div>
      <div className="mt-[14px]">
        <Stat label="获利比例：" lw="w-[175px]" value="95.27%" vw="w-[121px]" />
        <Stat label="平均成本：" lw="w-[175px]" value="78.80" vw="w-[94px]" />
        <Stat label="90%成本：" lw="w-[180px]" value="75.30-81.30" vw="w-[196px]" />
        <Stat label="集中度：" lw="w-[140px]" value="3.83%" vw="w-[103px]" />
      </div>
      <div className="mt-[14px] flex h-[56px] items-center leading-none text-[#5f5f61]">
        <Fit className="w-[70px] text-[35px]">说明</Fit>
        <span className="ml-[7px] mt-[2px] flex h-[42px] w-[41px] items-center justify-center bg-black">
          <svg viewBox="0 0 41 42" className="h-full w-full">
            <circle cx="20.500" cy="21" r="20.500" fill="#313131" />
            <circle cx="20.500" cy="11.500" r="3" fill="#fff" />
            <path d="M20.500 17v15" stroke="#fff" strokeWidth="5" />
          </svg>
        </span>
        <Fit className="ml-auto w-[200px] text-[38px]">2025-08-05</Fit>
      </div>
    </div>
  );
}

function BottomItem({ width, text, label, children }: { width: string; text: string; label: string; children: ReactNode }) {
  return (
    <div className={`flex flex-col items-center pt-[6px] ${width}`}>
      <svg viewBox="0 0 80 80" className="h-20 w-20" fill="none" stroke="#8b8b90" strokeWidth="3.6">
        {children}
      </svg>
      <Fit className={`mt-[11px] h-[54px] text-[51px] leading-none text-[#8b8b90] ${text}`}>{label}</Fit>
    </div>
  );
}

function BottomBar() {
  return (
    <div className="flex h-[159px] border-t-2 border-[#343434] bg-[#1d1d1d]">
      <div className="w-[320px] text-[#dc3023]">
        <Tri className="ml-[149px] mt-[9px] h-[10px] w-[24px] rotate-180 text-[#6b6b6e]" />
        <Fit className="ml-[59px] mt-[9px] h-[58px] w-[204px] text-[60px] leading-none">3617.60</Fit>
        <div className="flex h-[60px] items-center">
          <Fit className="ml-[38px] w-[104px] text-[51px] leading-none text-[#8b8b90]">上证</Fit>
          <Fit className="ml-[36px] w-[143px] text-[52px] leading-none">0.96%</Fit>
        </div>
      </div>
      <BottomItem width="w-[236px]" text="w-[102px]" label="交易">
        <path d="M21 13.500A33 33 0 0 1 69 55.500l1.500-3M69 55.500l10-5M62 66A33 33 0 0 1 12 24M12 24L2 28M12 24l-3 7M28 25l13 11 12-11M41 36v24M29 39h25M29 49h25" />
      </BottomItem>
      <BottomItem width="w-[234px]" text="w-[102px]" label="发帖">
        <path d="M52 10H16q-7 0-7 7v47q0 7 7 7h46q7 0 7-7V27" />
        <path d="M30 50q0-5 3-8L57 18l5 5-25 25q-3 3-7 2zM60 15l6-6q5-1 5 4l-6 6z" fill="#8b8b90" stroke="none" />
      </BottomItem>
      <BottomItem width="w-[234px]" text="w-[102px]" label="功能">
        <rect x="11" y="11" width="25" height="25" rx="3" />
        <rect x="11" y="43" width="25" height="26" rx="3" />
        <rect x="43" y="43" width="25" height="26" rx="3" />
        <path d="M56 10l13 14-13 14-13-14z" strokeLinejoin="round" />
      </BottomItem>
      <BottomItem width="w-[236px]" text="w-[156px]" label="设自选">
        <circle cx="40" cy="40" r="31.500" />
        <path d="M25.500 37v6M40 37v6M54.500 37v6" strokeWidth="6" />
      </BottomItem>
    </div>
  );
}

function SystemNav() {
  return (
    <div className="flex h-[147px] items-start bg-white pt-[44px]">
      <svg viewBox="0 0 58 54" className="ml-[321px] h-[54px] w-[58px]" fill="none" stroke="#898989" strokeWidth="7" strokeLinecap="round" strokeLinejoin="round">
        <path d="M15 49H47q7 0 7-7V20q0-7-7-7H5l12-8" />
        <path d="M4 13L17 5v8z" fill="#898989" strokeWidth="3" />
      </svg>
      <svg viewBox="0 0 68 54" className="ml-[217px] h-[54px] w-[68px]" fill="none" stroke="#898989" strokeWidth="6.500" strokeLinecap="round" strokeLinejoin="round">
        <path d="M4 28L34 5l30 23M13 34v10q0 6 6 6h30q6 0 6-6V34" />
      </svg>
      <div className="ml-[220px] mt-[9px] flex w-[53px] flex-col gap-[11px]">
        <i className="h-[7px] rounded-full bg-[#898989]" />
        <i className="h-[7px] rounded-full bg-[#898989]" />
        <i className="h-[7px] rounded-full bg-[#898989]" />
      </div>
    </div>
  );
}

export default function App() {
  return (
    <div className="flex h-[2800px] w-[1260px] flex-col overflow-hidden bg-[#1d1d1d] font-[Lato,'Noto_Sans_CJK_SC',sans-serif]">
      <StatusBar />
      <Header />
      <div className="flex h-[139px] items-center bg-[#18212f] pt-[1px]">
        <Fit className="ml-[42px] w-[1029px] text-[49px] leading-none text-[#3f6fba]">一键开通科创成长层权限！把握打新、交易机会</Fit>
        <Cross className="ml-[100px] h-[38px] w-[38px] text-[#3f6fba]" />
      </div>
      <Quote />
      <Notice />
      <Tabs />
      <MaRow />
      <div className="flex h-[1251px] flex-col bg-[#0d0d0d]">
        <div className="flex">
          <KChart />
          <ChipChart />
        </div>
        <div className="flex">
          <Indicators />
          <ChipStats />
        </div>
      </div>
      <BottomBar />
      <SystemNav />
    </div>
  );
}
